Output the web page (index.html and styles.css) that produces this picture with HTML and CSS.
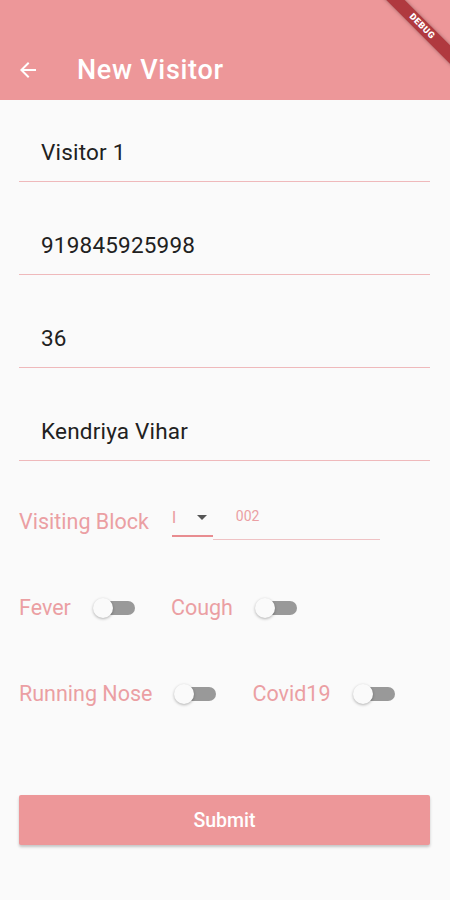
FILE: index.html
```html
<!DOCTYPE html>
<html>
<head>
<meta charset="utf-8">
<link rel="stylesheet" href="styles.css">
</head>
<body>
<div class="screen">
  <header class="appbar">
    <svg class="back" width="24" height="24" viewBox="0 0 24 24"><path d="M20 11H7.83l5.59-5.59L12 4l-8 8 8 8 1.41-1.41L7.83 13H20v-2z" fill="#fff"/></svg>
    <h1 class="title">New Visitor</h1>
    <div class="debug"><span>DEBUG</span></div>
  </header>
  <main class="form">
    <div class="field first"><span class="value">Visitor 1</span></div>
    <div class="field"><span class="value">919845925998</span></div>
    <div class="field"><span class="value">36</span></div>
    <div class="field"><span class="value">Kendriya Vihar</span></div>

    <div class="block-row">
      <span class="label">Visiting Block</span>
      <div class="dropdown">
        <span class="dd-value">I</span>
        <svg class="dd-arrow" width="10" height="5" viewBox="0 0 10 5"><path d="M0 0h10L5 5z" fill="#555"/></svg>
      </div>
      <div class="flat-input"><span class="flat-value">002</span></div>
    </div>

    <div class="switch-row">
      <span class="label">Fever</span>
      <div class="switch"><div class="track"></div><div class="thumb"></div></div>
      <span class="label">Cough</span>
      <div class="switch"><div class="track"></div><div class="thumb"></div></div>
    </div>
    <div class="switch-row">
      <span class="label">Running Nose</span>
      <div class="switch"><div class="track"></div><div class="thumb"></div></div>
      <span class="label">Covid19</span>
      <div class="switch"><div class="track"></div><div class="thumb"></div></div>
    </div>

    <button class="submit">Submit</button>
  </main>
</div>
</body>
</html>
```

FILE: styles.css
```css
* { box-sizing: border-box; }
html, body {
  margin: 0;
  padding: 0;
  background: #fafafa;
  font-family: Roboto, "Noto Sans", "Liberation Sans", sans-serif;
}
.screen {
  width: 450px;
  height: 900px;
  background: #fafafa;
  overflow: hidden;
  position: relative;
}
.appbar {
  height: 100px;
  background: #ed9799;
  display: flex;
  align-items: center;
  padding: 40px 0 0 16px;
  position: relative;
  overflow: hidden;
}
.back { display: block; flex: none; }
.title {
  margin: 0 0 0 37px;
  color: #fff;
  font-size: 27px;
  font-weight: 500;
  line-height: 30px;
  letter-spacing: 0.7px;
}
.debug {
  position: absolute;
  top: 20px;
  left: 372px;
  width: 100px;
  height: 13px;
  background: #b0393f;
  transform: rotate(45deg);
  display: flex;
  align-items: center;
  justify-content: center;
  box-shadow: 0 0 4px rgba(0,0,0,0.35);
}
.debug span {
  color: #fff;
  font-size: 9px;
  font-weight: 900;
  letter-spacing: 0.6px;
  line-height: 13px;
}
.form {
  padding: 0 20px 0 19px;
  display: flex;
  flex-direction: column;
}
.field {
  height: 82px;
  margin-top: 11px;
  border-bottom: 1px solid #efb9bb;
  display: flex;
  align-items: flex-end;
  padding: 0 0 17px 22px;
}
.field.first { margin-top: 0; }
.value {
  font-size: 22.5px;
  line-height: 24px;
  color: #212121;
  letter-spacing: 0.2px;
}
.label {
  font-size: 21.5px;
  color: #eb9fa3;
  line-height: 24px;
  white-space: nowrap;
}
.block-row {
  margin-top: 41px;
  height: 40px;
  display: flex;
  align-items: center;
}
.dropdown {
  margin-left: 23px;
  width: 41px;
  height: 40px;
  display: flex;
  align-items: center;
  border-bottom: 2px solid #e88c90;
  padding-top: 2px;
  position: relative;
  top: -5px;
}
.dd-value {
  font-size: 17px;
  color: #eb9fa3;
  width: 25px;
}
.dd-arrow { display: block; margin-top: 1px; }
.flat-input {
  width: 167px;
  height: 40px;
  border-bottom: 1px solid #efc2c4;
  display: flex;
  align-items: center;
  padding-left: 23px;
  padding-bottom: 8px;
  position: relative;
  top: -2px;
}
.flat-value {
  font-size: 14px;
  color: #eb9fa3;
}
.switch-row {
  display: flex;
  align-items: center;
  height: 40px;
  margin-top: 46px;
}
.switch {
  position: relative;
  width: 42px;
  height: 20px;
  margin: 0 36px 0 22px;
  flex: none;
}
.track {
  position: absolute;
  right: 0;
  top: 3px;
  width: 35px;
  height: 14px;
  border-radius: 7px;
  background: #999;
}
.thumb {
  position: absolute;
  left: 0;
  top: 0;
  width: 20px;
  height: 20px;
  border-radius: 50%;
  background: #fafafa;
  box-shadow: 0 1px 3px rgba(0,0,0,0.3);
}
.submit {
  margin-top: 81px;
  height: 50px;
  width: 411px;
  border: none;
  border-radius: 2px;
  background: #ed9799;
  color: #fff;
  font-family: Roboto, "Noto Sans", sans-serif;
  font-size: 19.5px;
  font-weight: 500;
  box-shadow: 0 2px 3px rgba(0,0,0,0.22);
}
```
